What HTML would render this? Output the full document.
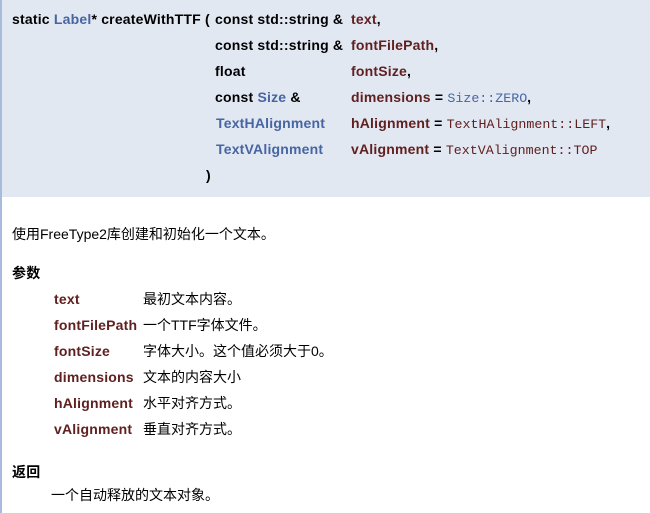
<!DOCTYPE html>
<html><head><meta charset="utf-8"><style>
html,body{margin:0;padding:0;background:#fff;}
body{width:650px;height:513px;position:relative;overflow:hidden;font-family:"Liberation Sans","Noto Sans CJK SC",sans-serif;font-size:14px;color:#000;}
.lb{position:absolute;left:0;top:0;width:2px;height:513px;background:#a9bbdc;}
.hd{position:absolute;left:2px;top:0;width:648px;height:197px;background:#e2e8f2;}
.t{position:absolute;white-space:nowrap;line-height:16px;}
.b{font-weight:bold;letter-spacing:0.2px;}
.k{color:#4665a2;}
.n{color:#602020;}
.mono{font-family:"Liberation Mono",monospace;font-weight:normal;font-size:13.3px;letter-spacing:0;}
</style></head><body>
<div class="hd"></div><div class="lb"></div>
<div class="t b" style="left:12px;top:11px">static <span class="k">Label</span>* createWithTTF (</div>
<div class="t b" style="left:215px;top:11px">const std::string &amp;</div>
<div class="t b" style="left:215px;top:37px">const std::string &amp;</div>
<div class="t b" style="left:215px;top:63px">float</div>
<div class="t b" style="left:215px;top:89px">const <span class="k">Size</span> &amp;</div>
<div class="t b k" style="left:216px;top:115px">TextHAlignment</div>
<div class="t b k" style="left:216px;top:141px">TextVAlignment</div>
<div class="t b" style="left:206px;top:167px">)</div>
<div class="t b n" style="left:351px;top:11px">text<span style="color:#000">,</span></div>
<div class="t b n" style="left:351px;top:37px">fontFilePath<span style="color:#000">,</span></div>
<div class="t b n" style="left:351px;top:63px">fontSize<span style="color:#000">,</span></div>
<div class="t b n" style="left:351px;top:89px">dimensions <span style="color:#000">=</span> <span class="mono k">Size::ZERO</span><span style="color:#000">,</span></div>
<div class="t b n" style="left:351px;top:115px">hAlignment <span style="color:#000">=</span> <span class="mono n">TextHAlignment::LEFT</span><span style="color:#000">,</span></div>
<div class="t b n" style="left:351px;top:141px">vAlignment <span style="color:#000">=</span> <span class="mono n">TextVAlignment::TOP</span></div>

<div class="t" style="left:12px;top:226px">使用FreeType2库创建和初始化一个文本。</div>
<div class="t b" style="left:12px;top:265px">参数</div>
<div class="t b n" style="left:54px;top:291px">text</div><div class="t" style="left:143px;top:291px">最初文本内容。</div>
<div class="t b n" style="left:54px;top:317px">fontFilePath</div><div class="t" style="left:143px;top:317px">一个TTF字体文件。</div>
<div class="t b n" style="left:54px;top:343px">fontSize</div><div class="t" style="left:143px;top:343px">字体大小。这个值必须大于0。</div>
<div class="t b n" style="left:54px;top:369px">dimensions</div><div class="t" style="left:143px;top:369px">文本的内容大小</div>
<div class="t b n" style="left:54px;top:395px">hAlignment</div><div class="t" style="left:143px;top:395px">水平对齐方式。</div>
<div class="t b n" style="left:54px;top:421px">vAlignment</div><div class="t" style="left:143px;top:421px">垂直对齐方式。</div>
<div class="t b" style="left:12px;top:464px">返回</div>
<div class="t" style="left:51px;top:487px">一个自动释放的文本对象。</div>
</body></html>
